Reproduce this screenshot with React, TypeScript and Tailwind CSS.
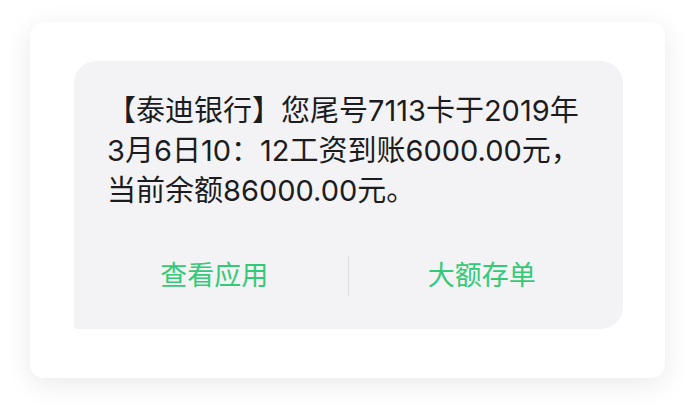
// SMS notification card — bank message bubble with two action links
const lines = [
  "【泰迪银行】您尾号7113卡于2019年",
  "3月6日10：12工资到账6000.00元，",
  "当前余额86000.00元。",
];

const actions = ["查看应用", "大额存单"];

export default function App() {
  return (
    <div
      lang="zh-CN"
      className="w-[696px] h-[416px] bg-white pt-[22px] pl-[30px]"
      style={{ fontFamily: "Inter, 'Noto Sans CJK SC', sans-serif" }}
    >
      <div className="w-[635px] h-[356px] rounded-[14px] bg-white shadow-[0_6px_28px_rgba(0,0,0,0.09)] pt-[39px] pl-[44px]">
        <div className="w-[549px] h-[268px] bg-[#f3f3f5] rounded-t-[22px] rounded-br-[22px] rounded-bl-[4px] pt-[30px] pl-[33px] pr-[20px]">
          <div className="text-[29px] leading-[40px] text-[#1c1c1e] [text-spacing-trim:space-all]">
            {lines.map((line) => (
              <div key={line} className="whitespace-nowrap">
                {line}
              </div>
            ))}
          </div>

          {/* action row */}
          <div className="mt-[45px] -ml-[33px] -mr-[20px] flex items-center h-[40px]">
            <div className="flex-1 pl-[7px] text-center text-[27px] text-[#35c977]">
              {actions[0]}
            </div>
            <div className="w-px h-full bg-[#dedee0]" />
            <div className="flex-1 pr-[8px] text-center text-[27px] text-[#35c977]">
              {actions[1]}
            </div>
          </div>
        </div>
      </div>
    </div>
  );
}
